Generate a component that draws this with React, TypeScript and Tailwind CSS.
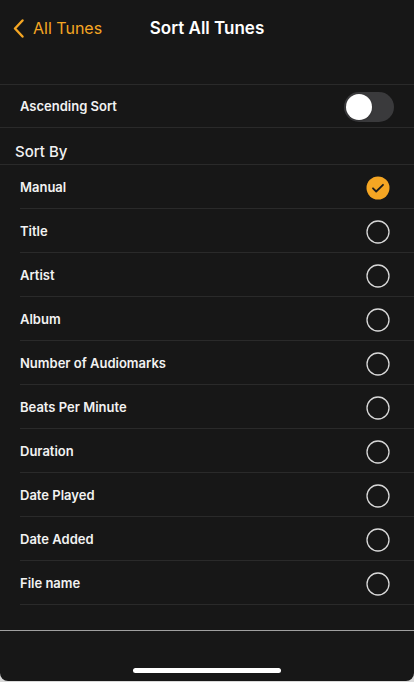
const OPTIONS = [
  'Manual',
  'Title',
  'Artist',
  'Album',
  'Number of Audiomarks',
  'Beats Per Minute',
  'Duration',
  'Date Played',
  'Date Added',
  'File name',
]

export default function App() {
  const selected = 'Manual'

  return (
    <div className="h-[682px] w-[414px] overflow-hidden bg-[#d9d9d9]">
      <div
        className="flex h-[681px] w-[414px] flex-col overflow-hidden rounded-b-[8px] bg-[#171717] text-[#f2f2f2]"
        style={{ fontFamily: 'Inter, "Liberation Sans", sans-serif' }}
      >
        <header className="relative flex h-[56px] items-center">
          <button className="flex items-center gap-[9px] pl-[13px] text-[16px] text-[#f5a623]">
            <svg width="11" height="19" viewBox="0 0 11 19">
              <path
                d="M9.5 1.5L2 9.5l7.5 8"
                fill="none"
                stroke="#f5a623"
                strokeWidth="2.4"
                strokeLinecap="round"
                strokeLinejoin="round"
              />
            </svg>
            <span>All Tunes</span>
          </button>
          <h1 className="absolute left-1/2 -translate-x-1/2 pt-[2px] text-[17px] font-semibold text-white">
            Sort All Tunes
          </h1>
        </header>

        <div className="h-[28px]" />

        <div className="flex h-[44px] items-center justify-between border-y border-[#2a2a2a] px-[20px] pt-[2px]">
          <span className="text-[13px] font-semibold">Ascending Sort</span>
          <div className="flex h-[30px] w-[50px] items-center rounded-full bg-[#3a3a3c] p-[2px]">
            <div className="h-[26px] w-[26px] rounded-full bg-white shadow" />
          </div>
        </div>

        <div className="flex h-[37px] items-center border-b border-[#2a2a2a] pl-[15px] pt-[12px]">
          <span className="text-[15px] font-medium">Sort By</span>
        </div>

        <ul>
          {OPTIONS.map((option) => (
            <li key={option} className="flex h-[44px] items-center pl-[20px]">
              <div className="flex h-full flex-1 items-center justify-between border-b border-[#2a2a2a] pr-[24px] pt-[2px]">
                <span className="text-[13px] font-semibold">{option}</span>
                {option === selected ? (
                  <svg width="24" height="24" viewBox="0 0 24 24">
                    <circle cx="12" cy="12" r="11.5" fill="#f5a623" />
                    <path
                      d="M7 12.3l3.2 3.2L17 8.8"
                      fill="none"
                      stroke="#1c1c1c"
                      strokeWidth="1.8"
                      strokeLinecap="round"
                      strokeLinejoin="round"
                    />
                  </svg>
                ) : (
                  <svg width="24" height="24" viewBox="0 0 24 24">
                    <circle cx="12" cy="12" r="11" fill="none" stroke="#d8d8d8" strokeWidth="1.3" />
                  </svg>
                )}
              </div>
            </li>
          ))}
        </ul>

        <div className="h-[25px]" />
        <div className="flex flex-1 flex-col items-center justify-end border-t border-[#a0a0a0] pb-[8px]">
          <div className="h-[5px] w-[148px] rounded-full bg-white" />
        </div>
      </div>
    </div>
  )
}
